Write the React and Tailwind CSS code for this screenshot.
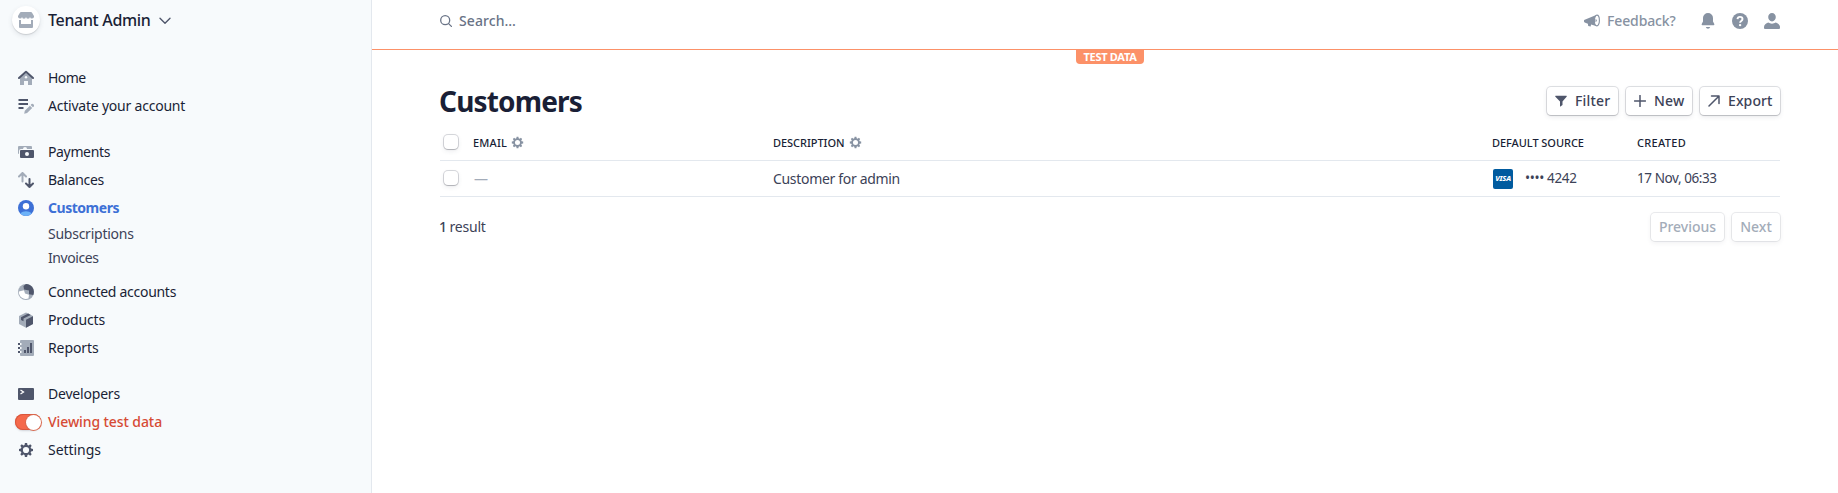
const DARK = '#4f566b';
const LIGHT = '#a3acb9';

function Icon({ children, className = 'size-4', box = 16 }) {
  return (
    <svg viewBox={`0 0 ${box} ${box}`} className={`block shrink-0 ${className}`} fill="none" aria-hidden="true">
      {children}
    </svg>
  );
}

const GEAR =
  'M6.9 1h2.2l.35 1.9 1.15.48L12.2 2.3l1.5 1.5-1.08 1.6.48 1.15L15 6.9v2.2l-1.9.35-.48 1.15 1.08 1.6-1.5 1.5-1.6-1.08-1.15.48L9.1 15H6.9l-.35-1.9-1.15-.48-1.6 1.08-1.5-1.5 1.08-1.6-.48-1.15L1 9.1V6.9l1.9-.35.48-1.15L2.3 3.8l1.5-1.5 1.6 1.08 1.15-.48zM8 4.9a3.1 3.1 0 1 0 0 6.2 3.1 3.1 0 0 0 0-6.2z';

const StoreIcon = () => (
  <Icon>
    <path d="M3 0h10a1 1 0 0 1 .9.55L16 4v.5a2 2 0 0 1-4 .2 2 2 0 0 1-4 0 2 2 0 0 1-4 0A2 2 0 0 1 0 4.500V4L2.100.55A1 1 0 0 1 3 0z" fill={LIGHT} />
    <path d="M1 8h2v4h10V8h2v7a1 1 0 0 1-1 1H2a1 1 0 0 1-1-1z" fill={LIGHT} />
  </Icon>
);
const HomeIcon = () => (
  <Icon>
    <path d="M8 3 2 8v7h4v-4h4v4h4V8z" fill={LIGHT} />
    <circle cx="8" cy="7.200" r="1.200" fill="#f7fafc" />
    <path d="m1 8 7-6.200L15 8" stroke={DARK} strokeWidth="2" strokeLinecap="round" strokeLinejoin="round" />
  </Icon>
);
const ActivateIcon = () => (
  <Icon>
    <path d="M.5 1h9.500v2H.5zM.5 5h9.500v2H.5zM.5 9h5v2h-5z" fill={DARK} />
    <path d="m6.200 15.800.6-3 5.100-5.100 2.300 2.300-5.100 5.100zM12.600 7l.9-.9a1.100 1.100 0 0 1 1.600 0l.7.7a1.100 1.100 0 0 1 0 1.600l-.9.9z" fill={LIGHT} />
  </Icon>
);
const PaymentsIcon = () => (
  <Icon>
    <path d="M1 2h12a1 1 0 0 1 1 1v2H3a2 2 0 0 0-2 2v3a1 1 0 0 1-1-1V3a1 1 0 0 1 1-1z" fill={LIGHT} />
    <path d="M5 5a2 2 0 0 1 4 0z" fill="#f7fafc" />
    <rect x="2" y="6" width="14" height="8" rx="1" fill={DARK} />
    <circle cx="9" cy="10" r="2" fill="#f7fafc" />
  </Icon>
);
const BalancesIcon = () => (
  <Icon>
    <path d="M4.500 9.500v-8M1 4.500 4.500 1 8 4.500" stroke={LIGHT} strokeWidth="2" strokeLinecap="round" strokeLinejoin="round" />
    <path d="M11.500 7v8M8 11.500l3.500 3.500 3.500-3.500" stroke={DARK} strokeWidth="2" strokeLinecap="round" strokeLinejoin="round" />
  </Icon>
);
const CustomersIcon = () => (
  <Icon>
    <circle cx="8" cy="8" r="8" fill="#3d70d6" />
    <path d="M2.200 13.500C3.800 12 5.800 11.200 8 11.200s4.200.8 5.800 2.300A8 8 0 0 1 8 16a8 8 0 0 1-5.800-2.500z" fill="#6cb2f8" />
    <circle cx="8" cy="6.300" r="3.200" fill="#fff" />
  </Icon>
);
const ConnectedIcon = () => (
  <Icon>
    <circle cx="8" cy="8" r="8" fill={LIGHT} />
    <path d="M8 0a8 8 0 0 1 7.300 11L11 10.200V6.500L6 5.500 5.500 2z" fill={DARK} />
    <path d="M.8 7.500 6 6.300l1 3.200 4 1.200-.5 3.800A7.200 7.200 0 0 1 .8 8z" fill="#fff" />
  </Icon>
);
const ProductsIcon = () => (
  <Icon>
    <path d="M8 .5 15 4v8l-7 3.700L1 12V4z" fill={LIGHT} />
    <path d="M15 4.200V12l-7 3.700V7.700z" fill={DARK} />
    <path d="M3 5.200 10.200 1.600l2.600 1.300L5.500 6.500v2.700L3 8z" fill={DARK} />
  </Icon>
);
const ReportsIcon = () => (
  <Icon>
    <path d="M3 0h12a1 1 0 0 1 1 1v14a1 1 0 0 1-1 1H3a1 1 0 0 1-1-1V1a1 1 0 0 1 1-1z" fill={LIGHT} />
    <path d="M0 3h2v2H0zM0 7h2v2H0zM0 11h2v2H0zM6 10h2v3H6zM9 7h2v6H9zM12 3h2v10h-2z" fill={DARK} />
    <path d="M2 3h1.500v2H2zM2 7h1.500v2H2zM2 11h1.500v2H2z" fill="#f7fafc" />
  </Icon>
);
const DevelopersIcon = () => (
  <Icon>
    <rect y="2" width="16" height="12" rx="1" fill={DARK} />
    <path d="m2.500 4 3 2-3 2" stroke="#fff" strokeWidth="1.300" />
  </Icon>
);
const SettingsIcon = () => (
  <Icon>
    <path d={GEAR} fill={DARK} fillRule="evenodd" />
  </Icon>
);
const SmallGear = () => (
  <Icon className="size-[13px]">
    <path d={GEAR} fill="#8792a2" fillRule="evenodd" />
  </Icon>
);
const Toggle = () => (
  <span className="-mr-[7px] -ml-[3px] flex h-4 w-[26px] shrink-0 items-center justify-end rounded-full bg-[#f5694b] shadow-[0_1px_2px_rgba(60,66,87,0.2)] ring-1 ring-inset ring-[#d9563c]">
    <span className="size-[15px] rounded-full bg-white ring-1 ring-[#d9694f]" />
  </span>
);

function NavItem({ icon, label, className }) {
  return (
    <a className="flex h-7 items-center gap-3.5 pl-[18px]">
      <span className="flex w-4 justify-center">{icon}</span>
      <span className={`whitespace-nowrap ${className}`}>{label}</span>
    </a>
  );
}

function Sidebar() {
  return (
    <aside className="flex w-[372px] shrink-0 flex-col border-r border-[#e3e8ee] bg-[#f7fafc]">
      <div className="mb-6 flex h-10 items-center pl-3">
        <span className="flex size-7 items-center justify-center rounded-full bg-white shadow-[0_2px_5px_rgba(60,66,87,0.12),0_1px_1px_rgba(0,0,0,0.12)]">
          <StoreIcon />
        </span>
        <span className="ml-2 text-base font-medium tracking-[-0.33px] text-[#1a1f36]">Tenant Admin</span>
        <Icon className="mt-0.5 ml-2 size-3" box={12}>
          <path d="m1 3.300 5 5 5-5" stroke={DARK} strokeWidth="1.400" strokeLinecap="round" strokeLinejoin="round" />
        </Icon>
      </div>
      <nav className="flex flex-col">
        <NavItem icon={<HomeIcon />} label="Home" className="tracking-[-0.55px] text-[#1a1f36]" />
        <NavItem icon={<ActivateIcon />} label="Activate your account" className="tracking-[-0.22px] text-[#1a1f36]" />
        <div className="h-[18px]" />
        <NavItem icon={<PaymentsIcon />} label="Payments" className="tracking-[-0.36px] text-[#1a1f36]" />
        <NavItem icon={<BalancesIcon />} label="Balances" className="tracking-[-0.3px] text-[#1a1f36]" />
        <NavItem icon={<CustomersIcon />} label="Customers" className="font-bold tracking-[-0.47px] text-[#3d70d6]" />
        <a className="flex h-6 items-center pl-12 tracking-[-0.25px] text-[#3c4257]">Subscriptions</a>
        <a className="flex h-6 items-center pl-12 tracking-[-0.42px] text-[#3c4257]">Invoices</a>
        <div className="h-2" />
        <NavItem icon={<ConnectedIcon />} label="Connected accounts" className="tracking-[-0.29px] text-[#1a1f36]" />
        <NavItem icon={<ProductsIcon />} label="Products" className="tracking-[-0.15px] text-[#1a1f36]" />
        <NavItem icon={<ReportsIcon />} label="Reports" className="tracking-[-0.1px] text-[#1a1f36]" />
        <div className="h-[18px]" />
        <NavItem icon={<DevelopersIcon />} label="Developers" className="tracking-[-0.2px] text-[#1a1f36]" />
        <NavItem icon={<Toggle />} label="Viewing test data" className="font-medium tracking-[-0.09px] text-[#d64b35]" />
        <NavItem icon={<SettingsIcon />} label="Settings" className="tracking-[-0.05px] text-[#1a1f36]" />
      </nav>
    </aside>
  );
}

function Header() {
  return (
    <header className="flex h-[50px] shrink-0 items-start border-b border-[#fc9168] pr-[58px] pl-[68px] font-medium">
      <div className="flex h-[42px] flex-1 items-center">
        <Icon className="size-3" box={12}>
          <circle cx="5.200" cy="5.200" r="4.500" stroke="#697386" strokeWidth="1.300" />
          <path d="m8.600 8.600 2.800 2.800" stroke="#697386" strokeWidth="1.300" strokeLinecap="round" />
        </Icon>
        <span className="ml-[7px] tracking-[0.09px] text-[#697386]">Search…</span>
      </div>
      <div className="flex h-[42px] items-center text-[#8792a2]">
        <Icon>
          <path d="M12.200 2v11L7 11.600 6.700 13.500l-2.500-.5-.3-2.200L.7 9.400A1 1 0 0 1 0 8.500V7.600a1 1 0 0 1 .7-.9z" fill="currentColor" />
          <ellipse cx="12.900" cy="7.500" rx="2.500" ry="5.400" stroke="currentColor" strokeWidth="1.100" fill="#fff" />
          <path d="M11.500 5.900a1.700 1.700 0 0 1 0 3.300z" fill="currentColor" />
        </Icon>
        <span className="ml-[7px] w-[70px] tracking-[-0.12px] whitespace-nowrap">Feedback?</span>
        <div className="ml-[23px] flex gap-4">
          <Icon>
            <path d="M8 0a5 5 0 0 1 5 5v3.500l1.300 2.600c.2.500 0 1-.6 1.100H2.300c-.6-.1-.8-.6-.6-1.100L3 8.500V5a5 5 0 0 1 5-5zM5.800 14h4.400a2.300 2.300 0 0 1-4.400 0z" fill="currentColor" />
          </Icon>
          <Icon>
            <circle cx="8" cy="8" r="8" fill="currentColor" />
            <path d="M5.500 6.200A2.500 2.500 0 0 1 8 3.900c1.500 0 2.500.9 2.500 2.200 0 1.900-2.400 1.800-2.400 3.600" stroke="#fff" strokeWidth="1.900" />
            <circle cx="8.100" cy="12.100" r="1.200" fill="#fff" />
          </Icon>
          <Icon>
            <path d="M8 0c2.200 0 3.800 1.700 3.800 4S10.200 8.500 8 8.500 4.200 6.300 4.200 4 5.800 0 8 0zM0 14c0-2.200 2-3.600 4.200-4.400C5.300 10.300 6.600 10.700 8 10.700s2.700-.4 3.800-1.100C14 10.400 16 11.800 16 14v1a1 1 0 0 1-1 1H1a1 1 0 0 1-1-1z" fill="currentColor" />
          </Icon>
        </div>
      </div>
    </header>
  );
}

function Button({ icon, label, className }) {
  return (
    <button
      className={`flex h-7 items-center gap-2 rounded bg-white font-medium whitespace-nowrap text-[#3c4257] shadow-[0_0_0_1px_rgba(60,66,87,0.16),0_1px_1px_rgba(0,0,0,0.12),0_2px_5px_rgba(60,66,87,0.1)] ${className}`}
    >
      {icon}
      <span>{label}</span>
    </button>
  );
}

function PageButton({ label, className }) {
  return (
    <button
      className={`flex h-7 items-center justify-center rounded bg-white font-medium text-[#a3acb9] shadow-[0_0_0_1px_rgba(60,66,87,0.1),0_2px_5px_rgba(60,66,87,0.08)] ${className}`}
    >
      {label}
    </button>
  );
}

const Checkbox = () => (
  <span className="-mt-0.5 ml-1 block size-3.5 rounded bg-white shadow-[0_0_0_1px_rgba(60,66,87,0.2),0_1px_1px_rgba(0,0,0,0.14),0_2px_5px_rgba(60,66,87,0.1)]" />
);

const ROW = 'grid h-9 grid-cols-[33px_300px_719px_145px_1fr] items-center border-b border-[#e3e8ee]';

function CustomersTable() {
  return (
    <div>
      <div className={`${ROW} text-[11px] font-medium text-[#1a1f36]`}>
        <Checkbox />
        <span className="flex items-center">
          <span className="w-[38px] tracking-[0.16px]">EMAIL</span>
          <SmallGear />
        </span>
        <span className="flex items-center">
          <span className="w-[76px] tracking-[-0.05px]">DESCRIPTION</span>
          <SmallGear />
        </span>
        <span className="tracking-[-0.05px] whitespace-nowrap">DEFAULT SOURCE</span>
        <span className="tracking-[0.31px]">CREATED</span>
      </div>
      <div className={`${ROW} text-[#3c4257]`}>
        <Checkbox />
        <span className="ml-px text-[#a3acb9]">—</span>
        <span className="tracking-[-0.32px]">Customer for admin</span>
        <span className="ml-px flex items-center">
          <span className="flex size-5 items-center justify-center rounded-[2px] bg-[#005b9f] text-[7.500px] leading-none font-extrabold tracking-[-0.2px] text-white italic">
            VISA
          </span>
          <span className="ml-3 text-[13.5px] tracking-[-0.35px] whitespace-nowrap">•••• 4242</span>
        </span>
        <span className="text-[13.5px] tracking-[-0.42px] whitespace-nowrap">17 Nov, 06:33</span>
      </div>
    </div>
  );
}

export default function App() {
  return (
    <div className="flex h-[493px] w-full overflow-hidden bg-white font-['Noto_Sans',sans-serif] text-sm">
      <Sidebar />
      <div className="flex min-w-0 flex-1 flex-col">
        <Header />
        <main className="flex flex-col pr-[58px] pl-[68px]">
          <div className="flex h-3.5 w-[68px] items-center justify-center self-center rounded-b bg-[#fc9168] pb-0.5 text-[11px] leading-none font-bold tracking-[-0.29px] whitespace-nowrap text-white">
            TEST DATA
          </div>
          <div className="mt-[23px] flex h-7 items-center gap-2">
            <h1 className="-ml-px flex-1 text-[28px] leading-7 font-bold tracking-[-0.83px] text-[#1a1f36]">Customers</h1>
            <Button
              className="w-[71px] pl-2 tracking-[0.2px]"
              label="Filter"
              icon={
                <Icon className="size-3" box={12}>
                  <path d="M.8.800h10.400a.5.5 0 0 1 .4.900L7.500 6.500V10l-2.500 1.700V6.500L.4 1.700a.5.5 0 0 1 .4-.9z" fill={DARK} />
                </Icon>
              }
            />
            <Button
              className="w-[66px] pl-2 tracking-[0.19px]"
              label="New"
              icon={
                <Icon className="size-3" box={12}>
                  <path d="M6 .5v11M.5 6h11" stroke={DARK} strokeWidth="1.500" strokeLinecap="round" />
                </Icon>
              }
            />
            <Button
              className="w-20 pl-2 tracking-[0.1px]"
              label="Export"
              icon={
                <Icon className="size-3" box={12}>
                  <path d="M1 11 10.800 1.200M3.500 1H11v7.500" stroke={DARK} strokeWidth="1.500" strokeLinecap="round" strokeLinejoin="round" />
                </Icon>
              }
            />
          </div>
          <div className="mt-2.5">
            <CustomersTable />
          </div>
          <div className="mt-4 flex h-7 items-center gap-2">
            <p className="-ml-px flex-1 text-[#3c4257]">
              <span className="font-medium tracking-[-1px]">1</span>
              <span className="tracking-[-0.2px]"> result</span>
            </p>
            <PageButton label="Previous" className="w-[73px]" />
            <PageButton label="Next" className="w-12" />
          </div>
        </main>
      </div>
    </div>
  );
}
